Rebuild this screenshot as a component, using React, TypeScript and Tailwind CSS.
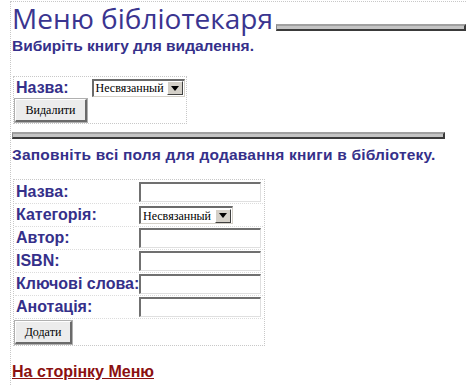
import React from 'react';

const labels = ['Назва:', 'Категорія:', 'Автор:', 'ISBN:', 'Ключові слова:', 'Анотація:'];

function FakeSelect() {
  return (
    <div className="flex items-center h-[18px] w-[94px] bg-white border-t-2 border-l-2 border-t-[#6b6b6b] border-l-[#6b6b6b] border-b border-r border-b-[#d4d0c8] border-r-[#d4d0c8]">
      <span className="flex-1 pl-[2px] text-[12px] leading-none text-black font-['Liberation_Serif',serif]">Несвязанный</span>
      <span className="flex items-center justify-center w-[16px] h-[14px] mr-[1px] bg-[#d4d0c8] border-t border-l border-white border-b border-r border-b-[#404040] border-r-[#404040]">
        <svg width="8" height="5" viewBox="0 0 8 5"><path d="M0 0h8L4 5z" fill="#000" /></svg>
      </span>
    </div>
  );
}

function FakeInput() {
  return (
    <div className="h-[20px] w-[122px] bg-white border-t-2 border-l-2 border-t-[#707070] border-l-[#707070] border-b border-r border-b-[#e0e0e0] border-r-[#e0e0e0]" />
  );
}

function Button({ label, w }: { label: string; w: string }) {
  return (
    <div className={`${w} h-[23px] flex items-center justify-center bg-[#ececec] border-t border-l border-t-white border-l-white border-b-2 border-r-2 border-b-[#6a6a6a] border-r-[#6a6a6a] outline outline-1 outline-[#b0b0b0] text-[12px] text-black font-['Liberation_Serif',serif]`}>
      {label}
    </div>
  );
}

function Hr({ w }: { w: string }) {
  return (
    <div className={`${w} h-[7px] bg-[#c4c4c4] border-t-2 border-t-[#a0a0a0] border-b-2 border-b-[#3a3a3a] border-r-2 border-r-[#3a3a3a] border-l border-l-[#888]`} />
  );
}

export default function App() {
  return (
    <div className="w-[466px] h-[385px] bg-white overflow-hidden font-['Liberation_Sans',Arial,sans-serif] text-[#35308a]">
      <div className="ml-[10px] mt-[1px] w-[456px] h-[384px] border-l border-t border-dotted border-[#c8c8c8] pl-[1px]">
        <div className="flex items-end h-[30px]">
          <h1 className="text-[28px] leading-none font-['Open_Sans',sans-serif] text-[#3a3590] whitespace-nowrap">Меню бібліотекаря</h1>
          <div className="mb-[1px] ml-[3px]"><Hr w="w-[190px]" /></div>
        </div>
        <p className="mt-[6px] text-[15.5px] font-bold leading-none">Вибиріть книгу для видалення.</p>

        <div className="mt-[22px] ml-[1px] w-[174px] border border-dotted border-[#c8c8c8] p-[1px]">
          <div className="flex items-center h-[20px]">
            <span className="w-[77px] pl-[1px] text-[16px] font-bold">Назва:</span>
            <FakeSelect />
          </div>
          <div className="mt-[1px]"><Button label="Видалити" w="w-[72px]" /></div>
        </div>

        <div className="mt-[8px]"><Hr w="w-[433px]" /></div>
        <p className="mt-[8px] text-[15.5px] tracking-[0.2px] font-bold leading-none whitespace-nowrap">Заповніть всі поля для додавання книги в бібліотеку.</p>

        <div className="mt-[17px] ml-[1px] w-[252px] border border-dotted border-[#c8c8c8] p-[1px]">
          {labels.map((l, i) => (
            <div key={l} className="flex items-center h-[23px] border-b border-dotted border-[#dcdcdc]">
              <span className="w-[124px] pl-[1px] text-[16px] font-bold whitespace-nowrap">{l}</span>
              {i === 1 ? <FakeSelect /> : <FakeInput />}
            </div>
          ))}
          <div className="mt-[2px]"><Button label="Додати" w="w-[57px]" /></div>
        </div>

        <a className="block mt-[18px] text-[16px] font-bold text-[#8b1010] underline leading-none">На сторінку Меню</a>
      </div>
    </div>
  );
}
